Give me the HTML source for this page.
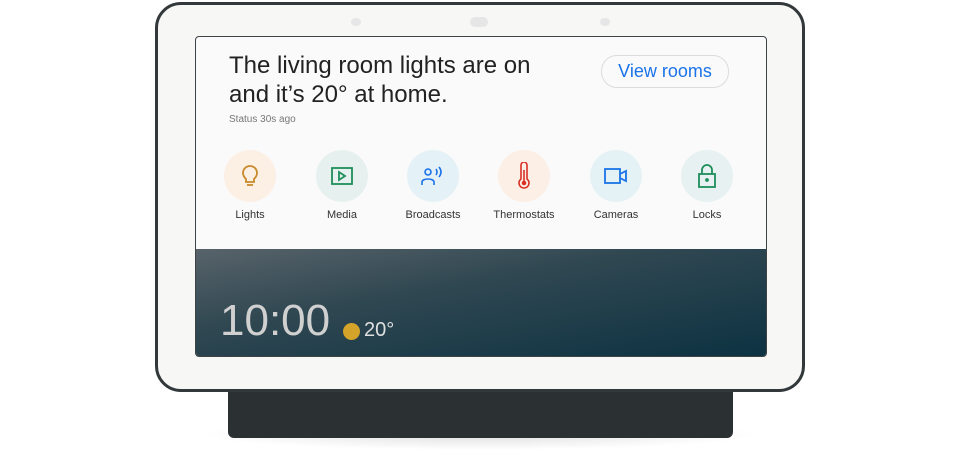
<!DOCTYPE html>
<html><head><style>
body{margin:0;width:960px;height:470px;background:#fff;position:relative;overflow:hidden;font-family:"Liberation Sans",sans-serif}
.shadow{position:absolute;left:200px;top:420px;width:560px;height:30px;border-radius:50%;background:radial-gradient(ellipse,rgba(0,0,0,.12),rgba(0,0,0,0) 70%)}
.base{position:absolute;left:228px;top:385px;width:505px;height:53px;background:#2b3033;border-radius:0 0 6px 6px}
.body{position:absolute;left:155px;top:2px;width:644px;height:384px;background:#f7f7f6;border:3px solid #33383b;border-radius:26px}
.cam{position:absolute;top:18px;background:#e6e6e6;border-radius:50%}
.screen{position:absolute;left:195px;top:36px;width:570px;height:319px;border:1px solid #3e4346;border-radius:4px;overflow:hidden;background:#fafafa}
.img{position:absolute;left:0;top:212px;width:100%;height:107px;background:linear-gradient(170deg,#58636a 0%,#2f4751 40%,#0d3242 100%)}
h1{position:absolute;left:33px;top:14px;margin:0;font-weight:400;font-size:24px;line-height:29px;color:#222}
.st{position:absolute;left:33px;top:77px;font-size:10px;color:#777}
.btn{position:absolute;left:405px;top:18px;width:126px;height:31px;border:1px solid #dcdcdc;border-radius:16px;color:#1a73e8;font-size:18px;text-align:center;line-height:31px}
.it{position:absolute;top:113px;width:90px;text-align:center;font-size:11px;color:#333}
.c{width:52px;height:52px;border-radius:50%;margin:0 auto 7px;display:flex;align-items:center;justify-content:center}
.clk{position:absolute;left:24px;top:47px;font-size:44px;color:#d0d0d0;font-weight:300}
.sun{position:absolute;left:147px;top:74px;width:17px;height:17px;border-radius:50%;background:#d4a32a}
.tmp{position:absolute;left:168px;top:70px;font-size:20px;color:#e0e0e0}
</style></head><body>
<div class="shadow"></div>
<div class="base"></div>
<div class="body"></div>
<div class="cam" style="left:351px;width:10px;height:8px"></div>
<div class="cam" style="left:470px;width:18px;height:10px;top:17px;border-radius:5px"></div>
<div class="cam" style="left:600px;width:10px;height:8px"></div>
<div class="screen">
<h1>The living room lights are on<br>and it’s 20° at home.</h1>
<div class="st">Status 30s ago</div>
<div class="btn">View rooms</div>
<div class="it" style="left:9px"><div class="c" style="background:#fcefe4"><svg width="24" height="26" viewBox="0 0 24 26" fill="none" stroke="#c9892a" stroke-width="1.8"><path d="M8 16c-2-2-3-4-3-6a7 7 0 0 1 14 0c0 2-1 4-3 6v3H8z"/><path d="M9 22h6"/></svg></div>Lights</div>
<div class="it" style="left:101px"><div class="c" style="background:#e6f1ef"><svg width="22" height="18" viewBox="0 0 22 18" fill="none" stroke="#1e8e5a" stroke-width="1.8"><rect x="1" y="1" width="20" height="16"/><path d="M8 5v8l6-4z"/></svg></div>Media</div>
<div class="it" style="left:192px"><div class="c" style="background:#e4f1f6"><svg width="24" height="20" viewBox="0 0 24 20" fill="none" stroke="#1a73e8" stroke-width="1.6"><circle cx="7" cy="6" r="3"/><path d="M1 19v-3c0-2 3-3 6-3s6 1 6 3v3"/><path d="M15 3q2 3 0 6M18 1q4 5 0 10"/></svg></div>Broadcasts</div>
<div class="it" style="left:283px"><div class="c" style="background:#fcefe6"><svg width="14" height="28" viewBox="0 0 14 28" fill="none" stroke="#d93025" stroke-width="1.6"><path d="M4 17V3a3 3 0 0 1 6 0v14a5 5 0 1 1-6 0z"/><circle cx="7" cy="21" r="1.5" fill="#d93025"/><path d="M7 8v12"/></svg></div>Thermostats</div>
<div class="it" style="left:375px"><div class="c" style="background:#e4f2f6"><svg width="24" height="18" viewBox="0 0 24 18" fill="none" stroke="#1a73e8" stroke-width="1.8"><rect x="1" y="2" width="15" height="14"/><path d="M16 7l6-3v10l-6-3"/></svg></div>Cameras</div>
<div class="it" style="left:466px"><div class="c" style="background:#e7f1f1"><svg width="18" height="24" viewBox="0 0 18 24" fill="none" stroke="#1e8e5a" stroke-width="1.8"><path d="M4 10V6a5 5 0 0 1 10 0v4"/><rect x="1" y="10" width="16" height="13"/><circle cx="9" cy="16" r="1" fill="#1e8e5a"/></svg></div>Locks</div>
<div class="img">
<div class="clk">10:00</div><div class="sun"></div><div class="tmp">20°</div>
</div>
</div>
</body></html>
